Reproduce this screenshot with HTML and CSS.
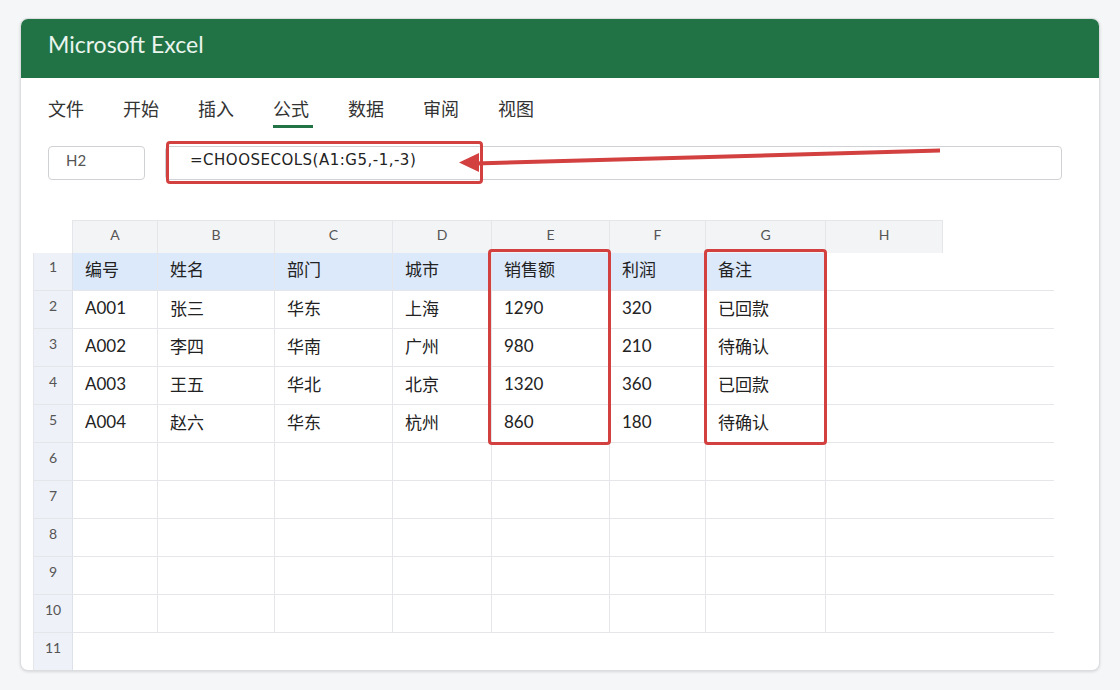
FILE: index.html
```html
<!DOCTYPE html>
<html>

<head>
    <meta name="viewport" content="width=device-width, minimum-scale=1">
    <title>Microsoft Excel</title>
    <link rel="stylesheet" href="styles.css">
</head>

<body>
    <div class="window">
        <div class="titlebar">Microsoft Excel</div>

        <!-- ribbon tabs -->
        <nav class="menu">
            <span class="tab">文件</span>
            <span class="tab">开始</span>
            <span class="tab">插入</span>
            <span class="tab active">公式</span>
            <span class="tab">数据</span>
            <span class="tab">审阅</span>
            <span class="tab">视图</span>
        </nav>

        <div class="toolbar">
            <div class="name-box">H2</div>
            <div class="formula-bar">
                <span class="formula">=CHOOSECOLS(A1:G5,-1,-3)</span>
                <div class="mark mark-formula"></div>
                <svg class="arrow" width="896" height="34" viewBox="0 0 896 34">
                    <path d="M310 15.5 L775 2.5 L775 6.5 L310 19.5 Z" fill="#d2403f" />
                    <path d="M294 16.5 L314 7 L314 26 Z" fill="#d2403f" />
                </svg>
            </div>
        </div>

        <div class="sheet">
            <table class="grid">
                <colgroup>
                    <col style="width:39px">
                    <col style="width:85px">
                    <col style="width:117px">
                    <col style="width:118px">
                    <col style="width:99px">
                    <col style="width:118px">
                    <col style="width:96px">
                    <col style="width:120px">
                    <col style="width:117px">
                    <col style="width:111px">
                </colgroup>
                <thead>
                    <tr>
                        <th class="corner"></th>
                        <th class="col">A</th>
                        <th class="col">B</th>
                        <th class="col">C</th>
                        <th class="col">D</th>
                        <th class="col">E</th>
                        <th class="col">F</th>
                        <th class="col">G</th>
                        <th class="col">H</th>
                        <th class="filler"></th>
                    </tr>
                </thead>
                <tbody>
                    <tr class="head-row">
                        <th class="rn">1</th>
                        <td>编号</td><td>姓名</td><td>部门</td><td>城市</td><td>销售额</td><td>利润</td><td>备注</td>
                        <td class="h"></td><td class="filler"></td>
                    </tr>
                    <tr>
                        <th class="rn">2</th>
                        <td>A001</td><td>张三</td><td>华东</td><td>上海</td><td>1290</td><td>320</td><td>已回款</td>
                        <td class="h"></td><td class="filler"></td>
                    </tr>
                    <tr>
                        <th class="rn">3</th>
                        <td>A002</td><td>李四</td><td>华南</td><td>广州</td><td>980</td><td>210</td><td>待确认</td>
                        <td class="h"></td><td class="filler"></td>
                    </tr>
                    <tr>
                        <th class="rn">4</th>
                        <td>A003</td><td>王五</td><td>华北</td><td>北京</td><td>1320</td><td>360</td><td>已回款</td>
                        <td class="h"></td><td class="filler"></td>
                    </tr>
                    <tr>
                        <th class="rn">5</th>
                        <td>A004</td><td>赵六</td><td>华东</td><td>杭州</td><td>860</td><td>180</td><td>待确认</td>
                        <td class="h"></td><td class="filler"></td>
                    </tr>
                    <tr>
                        <th class="rn">6</th>
                        <td></td><td></td><td></td><td></td><td></td><td></td><td></td>
                        <td class="h"></td><td class="filler"></td>
                    </tr>
                    <tr>
                        <th class="rn">7</th>
                        <td></td><td></td><td></td><td></td><td></td><td></td><td></td>
                        <td class="h"></td><td class="filler"></td>
                    </tr>
                    <tr>
                        <th class="rn">8</th>
                        <td></td><td></td><td></td><td></td><td></td><td></td><td></td>
                        <td class="h"></td><td class="filler"></td>
                    </tr>
                    <tr>
                        <th class="rn">9</th>
                        <td></td><td></td><td></td><td></td><td></td><td></td><td></td>
                        <td class="h"></td><td class="filler"></td>
                    </tr>
                    <tr>
                        <th class="rn">10</th>
                        <td></td><td></td><td></td><td></td><td></td><td></td><td></td>
                        <td class="h"></td><td class="filler"></td>
                    </tr>
                    <tr class="last-row">
                        <th class="rn">11</th>
                        <td></td><td></td><td></td><td></td><td></td><td></td><td></td>
                        <td class="h"></td><td class="filler"></td>
                    </tr>
                </tbody>
            </table>

            <!-- red highlight boxes over columns E and G -->
            <div class="mark mark-e"></div>
            <div class="mark mark-g"></div>
        </div>
    </div>
</body>

</html>
```

FILE: styles.css
```css
:root {
    --page: #f5f6f8;
    --green: #217346;
    --line: #e4e6ea;
    --text: #222;
    --muted: #555;
    --red: #d2403f;
}

* {
    box-sizing: border-box;
    padding: 0;
    margin: 0;
}

body {
    background: var(--page);
    padding: 18px 20px;
    font-family: "Lato", "Noto Sans CJK SC", sans-serif;
    color: var(--text);
}

.window {
    width: 1080px;
    height: 653px;
    background: #fff;
    border: 1px solid #dcdde0;
    border-radius: 8px;
    box-shadow: 0 1px 3px rgba(0, 0, 0, 0.12);
    overflow: hidden;
}

.titlebar {
    height: 59px;
    background: var(--green);
    color: #eaf5ee;
    font-size: 23px;
    line-height: 23px;
    padding: 14px 0 0 27px;
}

.menu {
    display: flex;
    gap: 39px;
    padding: 19px 0 0 27px;
}

.menu .tab {
    font-size: 18px;
    line-height: 24px;
    padding-bottom: 4px;
    color: #333;
    border-bottom: 3px solid transparent;
}

.menu .tab.active {
    border-bottom-color: var(--green);
    padding-right: 4px;
    margin-right: -4px;
}

.toolbar {
    display: flex;
    gap: 20px;
    margin-top: 18px;
    padding: 0 37px 0 27px;
}

.name-box,
.formula-bar {
    height: 34px;
    border: 1px solid #cfd1d5;
    border-radius: 4px;
    display: flex;
    align-items: center;
    padding-bottom: 6px;
    font-size: 15px;
}

.name-box {
    width: 97px;
    padding-left: 17px;
    color: var(--muted);
}

.formula-bar {
    flex: 1;
    position: relative;
    padding-left: 24px;
    color: #222;
}

.formula {
    font-family: "DejaVu Sans", sans-serif;
    letter-spacing: 0.5px;
}

.mark {
    position: absolute;
    border: 3px solid var(--red);
    border-radius: 4px;
    pointer-events: none;
}

.mark-formula {
    left: 0;
    top: -6px;
    width: 317px;
    height: 43px;
}

.arrow {
    position: absolute;
    left: -1px;
    top: -1px;
    overflow: visible;
}

.sheet {
    position: relative;
    margin: 40px 0 0 12px;
}

.grid {
    border-collapse: collapse;
    table-layout: fixed;
    width: 1020px;
}

.grid th,
.grid td {
    font-weight: normal;
    text-align: left;
    white-space: nowrap;
}

.grid thead tr {
    height: 32px;
}

.grid th.col {
    background: #f3f4f6;
    border: 1px solid var(--line);
    border-bottom: none;
    color: var(--muted);
    font-size: 14px;
    text-align: center;
    padding-bottom: 5px;
}

.grid tbody tr {
    height: 38px;
}

.grid th.rn {
    background: #eef1f8;
    border-left: 1px solid var(--line);
    border-right: 1px solid #dde1ea;
    border-bottom: 1px solid var(--line);
    color: var(--muted);
    font-size: 14px;
    text-align: center;
    padding-bottom: 9px;
}

.grid td {
    border-right: 1px solid var(--line);
    border-bottom: 1px solid var(--line);
    font-size: 17px;
    padding: 0 0 5px 12px;
}

.grid .head-row td {
    background: #dce9fa;
}

.grid .head-row td.h,
.grid .head-row td.filler {
    background: #fff;
}

.grid td.h,
.grid td.filler,
.grid .last-row td {
    border-right: none;
}

.grid .last-row td,
.grid .last-row th {
    border-bottom: none;
}

.mark-e {
    left: 455px;
    top: 29px;
    width: 123px;
    height: 196px;
}

.mark-g {
    left: 671px;
    top: 29px;
    width: 123px;
    height: 196px;
}
```
